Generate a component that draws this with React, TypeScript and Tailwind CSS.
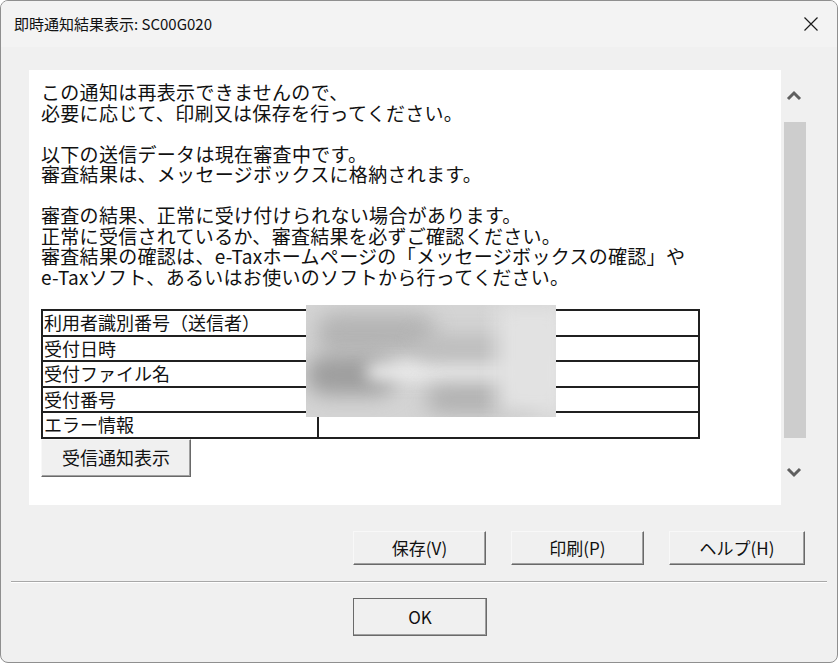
import React from 'react';

const jp = "font-['Noto_Sans_CJK_JP','Noto_Sans',sans-serif]";

const Btn: React.FC<{ label: string; className?: string }> = ({ label, className = '' }) => (
  <button
    className={`flex items-center justify-center bg-[#f0f0f0] border border-t-[#f8f8f8] border-l-[#f8f8f8] border-r-[#696969] border-b-[#696969] shadow-[inset_-1px_-1px_0_#a0a0a0] text-[17px] text-[#111] ${className}`}
  >
    {label}
  </button>
);

const rows = ['利用者識別番号（送信者）', '受付日時', '受付ファイル名', '受付番号', 'エラー情報'];

const Chevron: React.FC<{ down?: boolean }> = ({ down }) => (
  <svg width="16" height="12" viewBox="0 0 16 12">
    <polyline
      points={down ? '2,3 8,9 14,3' : '2,9 8,3 14,9'}
      fill="none"
      stroke="#5f5f5f"
      strokeWidth="3"
    />
  </svg>
);

const App: React.FC = () => {
  return (
    <div className={`w-[839px] h-[663px] bg-white ${jp}`}>
      <div className="w-[838px] h-[663px] flex flex-col bg-[#f0f0f0] border border-[#8f8f8f] rounded-[8px] overflow-hidden">
        {/* title bar */}
        <div className="h-[46px] shrink-0 bg-[#f3f3f3] flex items-center justify-between pl-[13px] pr-[18px]">
          <span className="text-[15px] text-[#111]">即時通知結果表示: SC00G020</span>
          <svg width="16" height="16" viewBox="0 0 16 16">
            <path d="M1.5 1.5 L14.5 14.5 M14.5 1.5 L1.5 14.5" stroke="#1a1a1a" strokeWidth="1.2" />
          </svg>
        </div>

        {/* content */}
        <div className="flex ml-[28px] mt-[23px]">
          <div className="w-[752px] h-[435px] bg-white pl-[12px] pt-[12px] text-[19px] tracking-[0.3px] leading-[20.5px] text-[#111]">
            <p>この通知は再表示できませんので、</p>
            <p>必要に応じて、印刷又は保存を行ってください。</p>
            <p className="mt-[20.5px]">以下の送信データは現在審査中です。</p>
            <p>審査結果は、メッセージボックスに格納されます。</p>
            <p className="mt-[20.5px]">審査の結果、正常に受け付けられない場合があります。</p>
            <p>正常に受信されているか、審査結果を必ずご確認ください。</p>
            <p>審査結果の確認は、e-Taxホームページの「メッセージボックスの確認」や</p>
            <p>e-Taxソフト、あるいはお使いのソフトから行ってください。</p>

            <div className="relative mt-[22px] w-[659px] border-2 border-[#202020] tracking-normal">
              {rows.map((r, i) => (
                <div
                  key={r}
                  className={`flex ${i > 0 ? 'h-[25.5px] border-t-2 border-[#202020]' : 'h-[23.5px]'}`}
                >
                  <div className="w-[276px] border-r-2 border-[#202020] pl-[1px] text-[18px] leading-[23px] whitespace-nowrap">
                    {r}
                  </div>
                  <div className="flex-1" />
                </div>
              ))}
              {/* masked values */}
              <div className="absolute left-[263px] top-[-6px] w-[250px] h-[112px] overflow-hidden bg-[#d4d4d4]">
                <div className="absolute left-[10px] top-[8px] w-[120px] h-[40px] rounded-full bg-[#b4b4b4] blur-[10px]" />
                <div className="absolute left-[0px] top-[50px] w-[90px] h-[40px] rounded-full bg-[#9e9e9e] blur-[10px]" />
                <div className="absolute left-[60px] top-[58px] w-[190px] h-[18px] rounded-full bg-[#ececec] blur-[8px]" />
                <div className="absolute left-[110px] top-[30px] w-[120px] h-[26px] rounded-full bg-[#bcbcbc] blur-[10px]" />
                <div className="absolute left-[120px] top-[80px] w-[110px] h-[28px] rounded-full bg-[#b0b0b0] blur-[10px]" />
                <div className="absolute left-[190px] top-[0px] w-[70px] h-[110px] bg-[#e2e2e2] blur-[10px]" />
              </div>
            </div>
            <Btn label="受信通知表示" className="w-[150px] h-[38px] text-[18px] tracking-normal" />
          </div>

          {/* scrollbar */}
          <div className="w-[25px] h-[435px] flex flex-col items-center">
            <div className="h-[52px] flex items-center justify-center">
              <Chevron />
            </div>
            <div className="ml-[2px] w-[22px] h-[316px] bg-[#cdcdcd]" />
            <div className="flex-1 flex items-center justify-center">
              <Chevron down />
            </div>
          </div>
        </div>

        {/* buttons */}
        <div className="flex gap-[25px] ml-[352px] mt-[26px]">
          <Btn label="保存(V)" className="w-[133px] h-[34px]" />
          <Btn label="印刷(P)" className="w-[133px] h-[34px]" />
          <Btn label="ヘルプ(H)" className="w-[136px] h-[34px]" />
        </div>

        <div className="mx-[10px] mt-[16px] border-t border-[#a8a8a8] border-b border-b-white" />

        <div className="ml-[352px] mt-[15px]">
          <Btn label="OK" className="w-[134px] h-[38px] outline outline-1 outline-[#6a6a6a] -outline-offset-1" />
        </div>
      </div>
    </div>
  );
};

export default App;
